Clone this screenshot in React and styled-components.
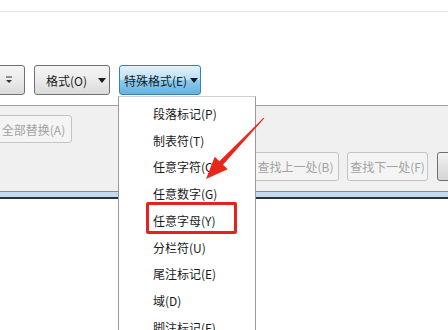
import React from 'react'
import styled, { createGlobalStyle, css } from 'styled-components'

const GlobalStyle = createGlobalStyle`
    body {
        margin: 0;
        background: #fff;
        font-family: "Noto Sans CJK SC", "Noto Sans", sans-serif;
    }
`

const menuItems = [
    '段落标记(P)',
    '制表符(T)',
    '任意字符(C)',
    '任意数字(G)',
    '任意字母(Y)',
    '分栏符(U)',
    '尾注标记(E)',
    '域(D)',
    '脚注标记(F)',
]

const Caret = () => (
    <svg width="8" height="5" viewBox="0 0 8 5"><path d="M0 0h8L4 5z" fill="#1c1c1c" /></svg>
)

const App = () => {
    return (
        <Screen>
            <GlobalStyle />
            <TopStrip />
            <Toolbar>
                <DropButton $w={32} $ml={-7} $pl={12}>
                    <svg width="6" height="8" viewBox="0 0 6 8">
                        <path d="M0 1h6" stroke="#333" strokeWidth="1" />
                        <path d="M0 4h6L3 7z" fill="#333" />
                    </svg>
                </DropButton>
                <DropButton $w={76} $pl={11} $gap={11}>格式(O) <Caret /></DropButton>
                <DropButton $w={82} $pl={4} $gap={3} $active>特殊格式(E) <Caret /></DropButton>
            </Toolbar>
            <Panel>
                <PanelRow>
                    <PanelButton $w={77} $ml={-5}>全部替换(A)</PanelButton>
                </PanelRow>
                <PanelRow $tall>
                    <PanelButton $w={87} $ml={252}>查找上一处(B)</PanelButton>
                    <PanelButton $w={81}>查找下一处(F)</PanelButton>
                    <PanelButton $w={80} $enabled />
                </PanelRow>
            </Panel>
            <BlueBand />
            <Menu>
                {menuItems.map((item, index) => (
                    <MenuItem key={index}>
                        {item}
                        {index === 4 && <Highlight />}
                    </MenuItem>
                ))}
            </Menu>
            <Arrow width="448" height="330" viewBox="0 0 448 330">
                <polygon
                    points="206,179 227.7,169.2 223,164.7 264.4,118.3 263.6,117.7 219.4,161.3 214.7,156.8"
                    fill="#e8271c"
                />
            </Arrow>
        </Screen>
    )
}

export default App

const Screen = styled.div`
    position: relative;
    width: 448px;
    height: 330px;
    overflow: hidden;
    background: #fff;
    font-size: 12px;
    color: #1a1a1a;
`
const TopStrip = styled.div`
    height: 11px;
    border-bottom: 1px solid #e2e2e2;
`
const Toolbar = styled.div`
    height: 84px;
    box-sizing: border-box;
    padding-top: 53px;
    display: flex;
    align-items: flex-start;
    gap: 9px;
`
const DropButton = styled.div`
    flex: none;
    box-sizing: border-box;
    width: ${p => p.$w}px;
    margin-left: ${p => p.$ml || 0}px;
    height: 30px;
    padding-left: ${p => p.$pl}px;
    display: flex;
    align-items: center;
    gap: ${p => p.$gap || 0}px;
    white-space: nowrap;
    border: 1px solid #707070;
    border-radius: 3px;
    background: linear-gradient(#f5f5f5, #ebebeb 50%, #dadada);
    ${p => p.$active && css`
        border-color: #3c7fb1;
        background: linear-gradient(#e2f2fc, #b9e0f7 48%, #8ccbee 52%, #62b3e4);
    `}
`
const Panel = styled.div`
    margin-top: 9px;
    height: 87px;
    box-sizing: border-box;
    border-top: 1px solid #a0a0a0;
    border-bottom: 1px solid #8c8c8c;
    background: #f0f0f0;
    padding-top: 9px;
    display: flex;
    flex-direction: column;
    gap: 9px;
`
const PanelRow = styled.div`
    display: flex;
    gap: 8px;
    height: ${p => p.$tall ? 29 : 28}px;
`
const PanelButton = styled.div`
    flex: none;
    box-sizing: border-box;
    width: ${p => p.$w}px;
    margin-left: ${p => p.$ml || 0}px;
    display: flex;
    align-items: center;
    justify-content: center;
    white-space: nowrap;
    border: 1px solid #c2c4c6;
    border-radius: 3px;
    background: #f4f4f4;
    color: #a2a2a2;
    ${p => p.$enabled && css`
        margin-left: 1px;
        border-color: #707070;
        background: linear-gradient(#f4f4f4, #e2e2e2 50%, #d6d6d6);
    `}
`
const BlueBand = styled.div`
    height: 5px;
    background: #c4dbf2;
    border-bottom: 2px solid #27333e;
`
const Menu = styled.div`
    position: absolute;
    left: 118px;
    top: 96px;
    width: 138px;
    height: 260px;
    box-sizing: border-box;
    padding-top: 3px;
    background: #fff;
    border: 1px solid #9a9a9a;
    border-top-color: #cfcfcf;
`
const MenuItem = styled.div`
    position: relative;
    height: 26.75px;
    padding-left: 34px;
    display: flex;
    align-items: center;
    white-space: nowrap;
    color: #1a1a1a;
`
const Highlight = styled.div`
    position: absolute;
    left: 27px;
    top: -5px;
    width: 91px;
    height: 32px;
    box-sizing: border-box;
    border: 3px solid #e32222;
    border-radius: 2px;
`
const Arrow = styled.svg`
    position: absolute;
    left: 0;
    top: 0;
    pointer-events: none;
`
